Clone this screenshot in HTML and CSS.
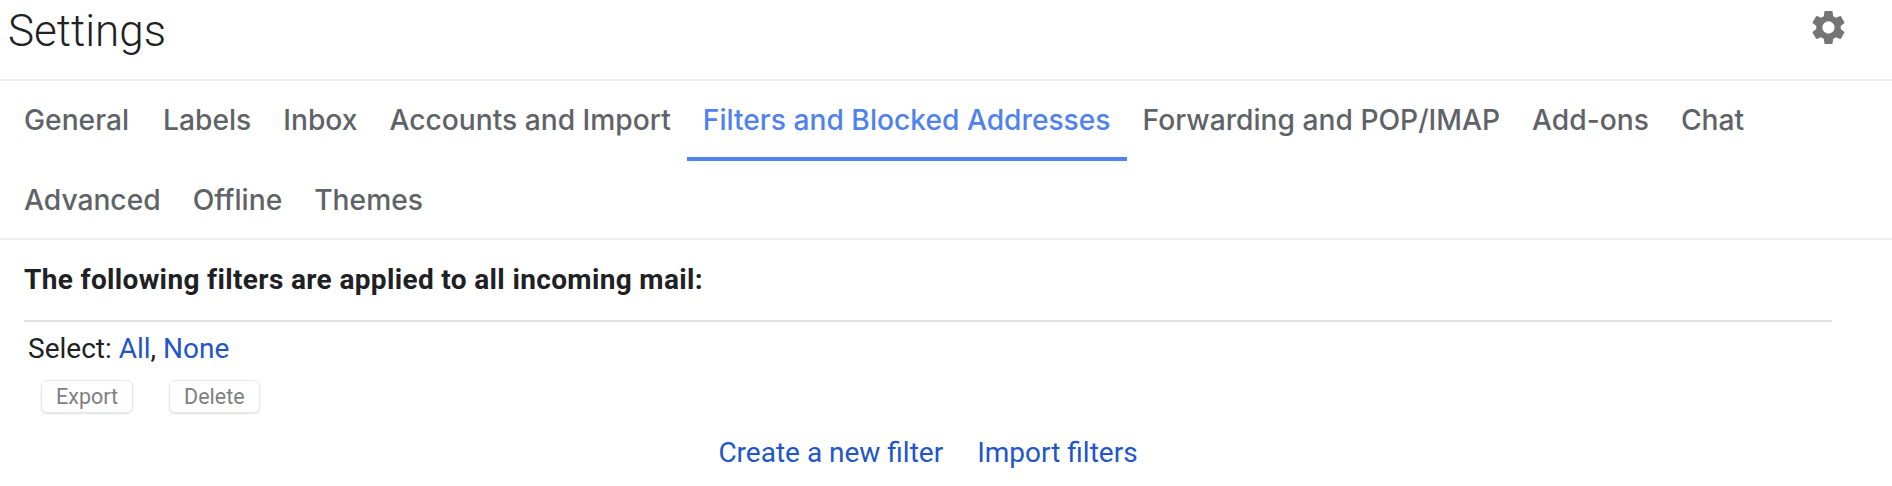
FILE: index.html
```html
<!DOCTYPE html>
<html lang="en">

<head>
    <meta charset="UTF-8">
    <title>Settings</title>
    <link rel="stylesheet" href="styles.css">
</head>

<body>
    <header class="page-head">
        <h1>Settings</h1>
        <svg class="gear" viewBox="0 0 24 24" aria-hidden="true">
            <path d="M19.14 12.94c.04-.3.06-.61.06-.94s-.02-.64-.07-.94l2.03-1.58a.49.49 0 0 0 .12-.61l-1.92-3.32a.49.49 0 0 0-.59-.22l-2.39.96a7 7 0 0 0-1.62-.94l-.36-2.54a.48.48 0 0 0-.48-.41h-3.84a.48.48 0 0 0-.47.41l-.36 2.54a7.3 7.3 0 0 0-1.62.94l-2.39-.96a.49.49 0 0 0-.59.22L2.74 8.87a.48.48 0 0 0 .12.61l2.03 1.58c-.05.3-.09.63-.09.94s.02.64.07.94l-2.03 1.58a.49.49 0 0 0-.12.61l1.92 3.32c.12.22.37.29.59.22l2.39-.96c.5.38 1.03.7 1.62.94l.36 2.54c.05.24.24.41.48.41h3.84c.24 0 .44-.17.47-.41l.36-2.54a7 7 0 0 0 1.62-.94l2.39.96c.22.08.47 0 .59-.22l1.92-3.32a.48.48 0 0 0-.12-.61zM12 15.6A3.6 3.6 0 1 1 12 8.4a3.6 3.6 0 0 1 0 7.2z"/>
        </svg>
    </header>

    <!-- tabs -->
    <nav class="tabs">
        <a class="tab">General</a>
        <a class="tab">Labels</a>
        <a class="tab">Inbox</a>
        <a class="tab">Accounts and Import</a>
        <a class="tab active">Filters and Blocked Addresses</a>
        <a class="tab">Forwarding and POP/IMAP</a>
        <a class="tab">Add-ons</a>
        <a class="tab">Chat</a>
        <a class="tab">Advanced</a>
        <a class="tab">Offline</a>
        <a class="tab">Themes</a>
    </nav>

    <section class="filters">
        <h2>The following filters are applied to all incoming mail:</h2>
        <div class="select-row">Select: <a>All</a>, <a>None</a></div>
        <div class="actions">
            <button disabled>Export</button>
            <button disabled>Delete</button>
        </div>
        <div class="links">
            <a>Create a new filter</a>
            <a>Import filters</a>
        </div>
    </section>
</body>

</html>
```

FILE: styles.css
```css
body {
    margin: 0;
    background: #fff;
    font-family: Roboto, "Liberation Sans", sans-serif;
    color: #202124;
    overflow: hidden;
}

.page-head {
    display: flex;
    justify-content: space-between;
    height: 79px;
    border-bottom: 2px solid #eeeeee;
}

.page-head h1 {
    margin: 0;
    padding: 6px 0 0 8px;
    font-size: 44px;
    line-height: 50px;
    font-weight: 300;
}

.gear {
    width: 41px;
    height: 41px;
    margin: 7px 43px 0 0;
    fill: #757575;
}

.tabs {
    display: flex;
    flex-wrap: wrap;
    padding: 0 8px;
    border-bottom: 2px solid #eeeeee;
    height: 157px;
    align-content: flex-start;
}

.tab {
    height: 76px;
    line-height: 79px;
    padding: 0 16px;
    font-family: Inter, Roboto, sans-serif;
    font-size: 28.2px;
    font-weight: 500;
    color: #5f6368;
    border-bottom: 4px solid transparent;
}

.tab:first-child {
    margin-right: 2px;
}

.tab.active {
    color: #4f82ee;
    border-bottom-color: #4f82ee;
}

.filters {
    padding: 0 60px 0 24px;
}

.filters h2 {
    margin: 0;
    height: 80px;
    line-height: 80px;
    font-size: 28px;
    font-weight: 700;
    letter-spacing: 0.35px;
    border-bottom: 2px solid #e0e0e0;
}

.select-row {
    padding-left: 4px;
    font-size: 28px;
    line-height: 54px;
}

.filters a {
    color: #2255c9;
}

.actions {
    display: flex;
    gap: 36px;
    padding: 4px 0 0 17px;
}

button {
    height: 33px;
    padding: 0 14px;
    border: 1px solid #e8e8e8;
    border-radius: 6px;
    background: #fff;
    box-shadow: 0 1px 2px rgba(0, 0, 0, 0.12);
    font-family: inherit;
    font-size: 21.5px;
    color: #808080;
}

.links {
    display: flex;
    justify-content: center;
    gap: 34px;
    margin-top: 22px;
    font-size: 28px;
    line-height: 36px;
}
```
